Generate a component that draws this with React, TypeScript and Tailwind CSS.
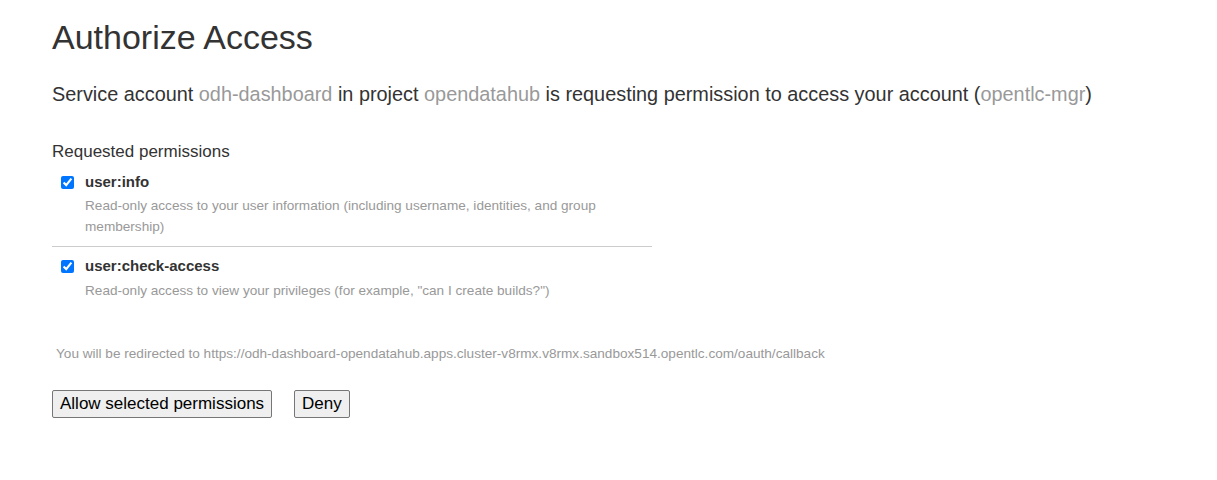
import React from "react";

const scopes = [
  {
    name: "user:info",
    desc: "Read-only access to your user information (including username, identities, and group membership)",
  },
  {
    name: "user:check-access",
    desc: 'Read-only access to view your privileges (for example, "can I create builds?")',
  },
];

export default function App() {
  return (
    <div className="min-h-[480px] bg-white text-[#333] font-['Liberation_Sans',Arial,sans-serif] px-[52px] pt-[17px]">
      <h1 className="text-[34px] leading-[40px] font-normal">Authorize Access</h1>
      <p className="mt-[24px] text-[19.87px] leading-[26px]">
        Service account <span className="text-[#999]">odh-dashboard</span> in project{" "}
        <span className="text-[#999]">opendatahub</span> is requesting permission to access your account (
        <span className="text-[#999]">opentlc-mgr</span>)
      </p>

      <div className="mt-[33px] w-[600px]">
        <div className="text-[17px] leading-[24px]">Requested permissions</div>
        {scopes.map((s, i) => (
          <div key={s.name} className={i > 0 ? "border-t border-[#ccc] pt-[9px]" : "pt-[8px] pb-[9px]"}>
            <label className="flex items-start">
              <input type="checkbox" defaultChecked className="mt-[4px] ml-[9px] w-[13px] h-[13px]" />
              <div className="ml-[11px]">
                <div className="text-[15px] leading-[20px] font-bold">{s.name}</div>
                <div className={`${i > 0 ? "mt-[4px]" : "mt-[3px]"} text-[13.6px] leading-[21px] text-[#999]`}>{s.desc}</div>
              </div>
            </label>
          </div>
        ))}
      </div>

      <div className="mt-[44px] ml-[4px] text-[13.6px] leading-[18px] text-[#999]">
        You will be redirected to https://odh-dashboard-opendatahub.apps.cluster-v8rmx.v8rmx.sandbox514.opentlc.com/oauth/callback
      </div>

      <div className="mt-[27px] flex gap-[22px]">
        <button className="h-[28px] px-[7px] text-[17px] text-black bg-[#efefef] border border-[#767676] rounded-[2px]">
          Allow selected permissions
        </button>
        <button className="h-[28px] px-[7px] text-[17px] text-black bg-[#efefef] border border-[#767676] rounded-[2px]">
          Deny
        </button>
      </div>
    </div>
  );
}
